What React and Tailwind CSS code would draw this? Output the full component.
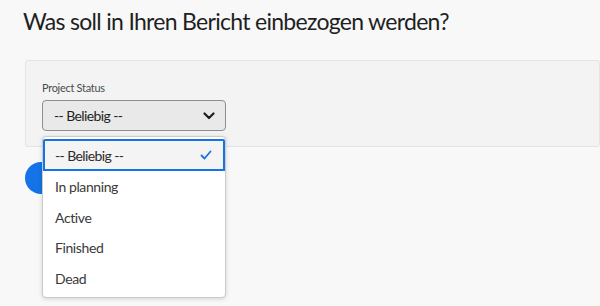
import React from "react";

function Chevron() {
  return (
    <svg width="12" height="8" viewBox="0 0 12 8" fill="none">
      <path d="M1.5 1.5 L6 6 L10.5 1.5" stroke="#1f1f1f" strokeWidth="2.2" strokeLinecap="round" strokeLinejoin="round" />
    </svg>
  );
}

function Check() {
  return (
    <svg width="12" height="10" viewBox="0 0 12 10" fill="none">
      <path d="M1.5 5.5 L4.5 8.5 L10.5 1.5" stroke="#1473e6" strokeWidth="1.8" strokeLinecap="round" strokeLinejoin="round" />
    </svg>
  );
}

export default function App() {
  const items = ["In planning", "Active", "Finished", "Dead"];
  return (
    <div
      className="relative w-[600px] h-[306px] overflow-hidden bg-[#f8f8f8] text-[#2c2c2c]"
      style={{ fontFamily: '"Lato", "Liberation Sans", sans-serif' }}
    >
      <h1 className="pl-[23px] pt-[6px] text-[23px] leading-[31px] font-normal tracking-[-0.7px] text-[#1f1f1f]">
        Was soll in Ihren Bericht einbezogen werden?
      </h1>
      <div className="ml-[25px] mt-[23px] w-[575px] h-[87px] rounded-[3px] border border-[#e4e4e4] bg-[#f3f3f3] pl-[16px] pt-[20px]">
        <div className="text-[11px] leading-[14px] tracking-[-0.3px] text-[#4b4b4b]">Project Status</div>
        <div className="mt-[5px] flex h-[31px] w-[184px] items-center justify-between rounded-[4px] border border-[#8e8e8e] bg-[#e9e9e9] pl-[11px] pr-[10px]">
          <span className="text-[14px] tracking-[-0.6px] text-[#1f1f1f]">-- Beliebig --</span>
          <Chevron />
        </div>
      </div>
      <div className="ml-[25px] mt-[15px] h-[32px] w-[120px] rounded-full bg-[#1473e6]" />

      <div className="absolute left-[42px] top-[136px] w-[184px] h-[162px] rounded-[4px] border border-[#cacaca] bg-white shadow-[0_1px_4px_rgba(0,0,0,0.15)] pt-[2px]">
        <div className="flex h-[32px] items-center justify-between border-2 border-[#1473e6] bg-[#f4f4f4] pl-[10px] pr-[11px] rounded-t-[2px]">
          <span className="text-[14px] tracking-[-0.6px] text-[#2c2c2c]">-- Beliebig --</span>
          <Check />
        </div>
        {items.map((t) => (
          <div key={t} className="flex h-[30.7px] items-center pl-[12px] text-[14px] tracking-[-0.4px] text-[#3a3a3a]">
            {t}
          </div>
        ))}
      </div>
    </div>
  );
}
